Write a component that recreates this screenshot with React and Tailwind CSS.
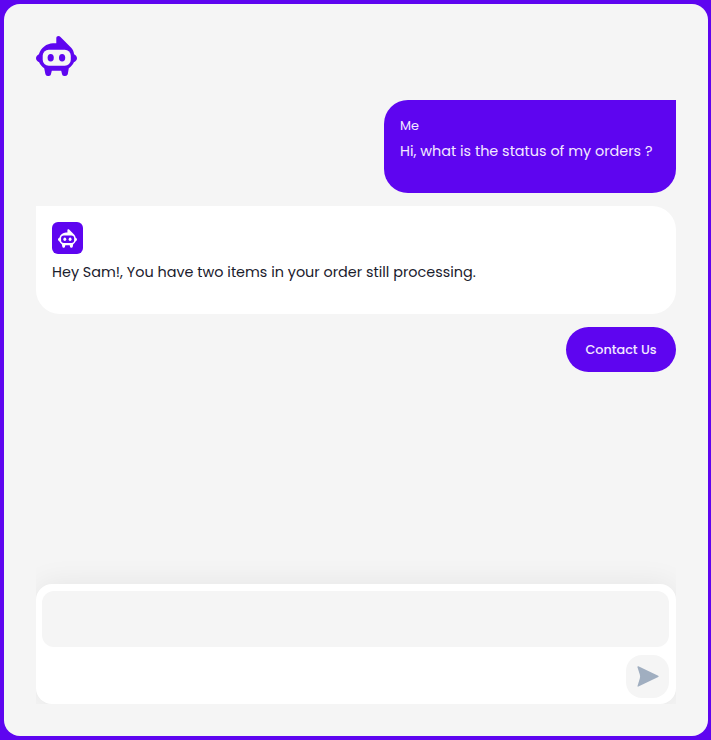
function BotIcon({ className, face }) {
  return (
    <svg viewBox="0 0 41 40" className={className} fill="none">
      <path
        fill="currentColor"
        d="M20.3 7.2V2.2C20.3.2 22.8-.6 24.5.9L35.2 11.8C37 13.7 37.8 16 38.1 18.2C39.8 19 41 20.5 41 22.2C41 23.9 39.7 25.3 37.9 26.3C36.9 28.7 35 30.8 32.8 32.3L31.8 38C31.5 39.3 30.5 40 29.2 40H28.2C27 40 26.2 39.3 26 38L25.2 34.8H15.8L15 38C14.8 39.3 14 40 12.8 40H11.8C10.5 40 9.7 39.3 9.4 38L8.2 32.3C6 30.8 4.1 28.7 3.1 26.3C1.3 25.3 0 23.9 0 22.2C0 20.5 1.2 19 2.9 18.2C4.9 11.7 10.5 7.4 17 7.2Z"
      />
      <rect x="6.7" y="13.7" width="28.1" height="16.1" rx="6" className={face} />
      <ellipse cx="14.7" cy="21.7" rx="3.1" ry="3.8" fill="currentColor" />
      <ellipse cx="26.1" cy="21.7" rx="3.1" ry="3.8" fill="currentColor" />
    </svg>
  );
}

function Chat() {
  return (
    <div className="mt-6 flex h-[604px] flex-col overflow-hidden">
      <div className="h-[93px] w-[292px] shrink-0 self-end rounded-3xl rounded-tr-none bg-[#5e05f0] px-4 pt-4 text-[#f3e9ff]">
        <p className="text-[12.8px] leading-5">Me</p>
        <p className="mt-[5px] text-[14.4px] leading-5 whitespace-nowrap">Hi, what is the status of my orders ?</p>
      </div>
      <div className="mt-[13px] h-[108px] shrink-0 rounded-3xl rounded-tl-none bg-white px-4 pt-4 text-[#1a202c]">
        <div className="flex h-8 w-[31px] items-center justify-center rounded-md bg-[#5e05f0] text-white">
          <BotIcon className="mt-px h-[19px] w-[19px]" face="fill-[#5e05f0]" />
        </div>
        <p className="mt-2 text-[14.4px] leading-5 whitespace-nowrap">
          Hey Sam!, You have two items in your order still processing.
        </p>
      </div>
      <button className="mt-[13px] h-[45px] w-[110px] shrink-0 self-end rounded-full bg-[#5e05f0] pt-px text-[12.8px] font-medium text-[#f3e9ff]">
        Contact Us
      </button>
      <div className="mt-auto flex h-[120px] shrink-0 flex-col rounded-2xl bg-white px-[6px] pt-[7px] pr-[7px] pb-[6px] shadow-[0_0_30px_rgba(0,0,0,0.07)]">
        <textarea className="block h-14 w-full resize-none rounded-xl bg-[#f5f5f5] outline-none" />
        <button className="mt-2 flex h-[43px] w-[43px] items-center justify-center self-end rounded-2xl bg-[#f5f5f5]">
          <svg viewBox="0 0 22 21" className="mb-px ml-px h-[21px] w-[22px]">
            <path d="M.4.9C.4.3.8.1 1.4.3L21.2 9.8C21.8 10.1 21.8 10.7 21.2 11L1.4 20.6C.8 20.8.4 20.6.5 19.9L2.8 12.5C3.2 11.2 3.2 9.8 2.8 8.5Z" fill="#a0aec0" />
          </svg>
        </button>
      </div>
    </div>
  );
}

export default function App() {
  return (
    <div className="h-[740px] w-[711px] bg-[#5e05f0] pt-1 pr-[3px] pb-1 pl-1 font-['Poppins','Inter',sans-serif] antialiased">
      <main className="h-full rounded-2xl bg-[#f5f5f5] p-8">
        <BotIcon className="h-10 w-[41px] text-[#5e05f0]" face="fill-[#f5f5f5]" />
        <Chat />
      </main>
    </div>
  );
}
